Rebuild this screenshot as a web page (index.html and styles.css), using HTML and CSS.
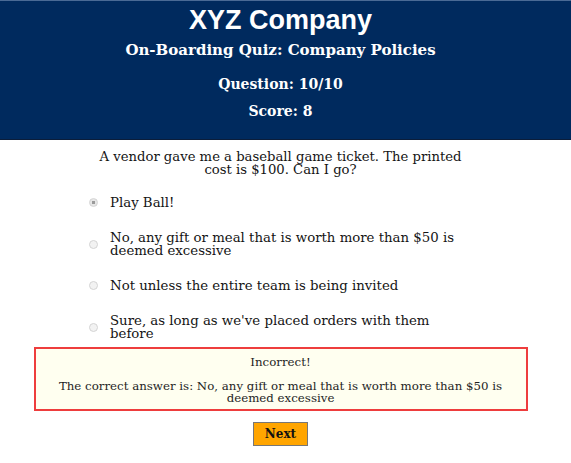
FILE: index.html
```html
<!DOCTYPE html>
<html>
<head>
<meta charset="utf-8">
<link rel="stylesheet" href="styles.css">
</head>
<body>
<header class="header">
  <h1 class="company">XYZ Company</h1>
  <h2 class="quiz-title">On-Boarding Quiz: Company Policies</h2>
  <div class="stat">Question: 10/10</div>
  <div class="stat">Score: 8</div>
</header>
<main class="quiz">
  <p class="question">A vendor gave me a baseball game ticket. The printed<br>cost is $100. Can I go?</p>
  <ul class="options">
    <li class="option"><span class="radio checked"></span><span class="label">Play Ball!</span></li>
    <li class="option"><span class="radio"></span><span class="label">No, any gift or meal that is worth more than $50 is<br>deemed excessive</span></li>
    <li class="option"><span class="radio"></span><span class="label">Not unless the entire team is being invited</span></li>
    <li class="option"><span class="radio"></span><span class="label">Sure, as long as we've placed orders with them<br>before</span></li>
  </ul>
  <div class="feedback">
    <div class="verdict">Incorrect!</div>
    <div class="answer">The correct answer is: No, any gift or meal that is worth more than $50 is<br>deemed excessive</div>
  </div>
  <div class="actions"><button class="next">Next</button></div>
</main>
</body>
</html>
```
FILE: styles.css
```css
html, body {
  margin: 0;
  padding: 0;
  background: #fff;
}
body {
  font-family: "DejaVu Serif", serif;
  color: #141414;
}
.header {
  background: #002a5e;
  border-top: 1px solid #4a6a95;
  border-bottom: 1px solid #0b1d3a;
  height: 140px;
  box-sizing: border-box;
  color: #fff;
  text-align: center;
  padding: 4px 10px 0 0;
}
.company {
  font-family: "Liberation Sans", Arial, sans-serif;
  font-size: 27px;
  font-weight: bold;
  margin: 0;
  line-height: 30px;
}
.quiz-title {
  font-size: 15px;
  font-weight: bold;
  margin: 5px 0 0;
  line-height: 20px;
}
.stat {
  font-size: 14px;
  font-weight: bold;
  line-height: 20px;
  margin-top: 14px;
}
.stat + .stat {
  margin-top: 7px;
}
.quiz {
  display: flex;
  flex-direction: column;
  align-items: center;
  padding-right: 10px;
}
.question {
  font-size: 13.2px;
  line-height: 13px;
  text-align: center;
  margin: 10px 0 0;
}
.options {
  list-style: none;
  margin: 20px 0 0 89px;
  padding: 0;
  align-self: flex-start;
  display: flex;
  flex-direction: column;
  gap: 22px;
}
.option {
  display: flex;
  align-items: center;
  font-size: 13.3px;
  line-height: 13px;
}
.radio {
  width: 7px;
  height: 7px;
  border-radius: 50%;
  border: 1px solid #d4d4d4;
  background: #f2f2f2;
  margin-right: 12px;
  flex: none;
}
.radio.checked {
  background: radial-gradient(circle, #9a9a9a 0 1.5px, #e6e6e6 2px);
}
.feedback {
  margin-top: 7px;
  width: 494px;
  box-sizing: border-box;
  border: 2px solid #ee3d3d;
  background: #fffff0;
  text-align: center;
  padding: 6px 10px 5px;
  font-size: 11.8px;
  color: #1e1e1e;
}
.verdict {
  line-height: 14px;
}
.answer {
  margin-top: 11px;
  line-height: 12px;
}
.actions {
  margin-top: 11px;
}
.next {
  font-family: "DejaVu Serif", serif;
  font-size: 12px;
  font-weight: bold;
  background: #ffa500;
  border: 1px solid #777;
  color: #111;
  width: 55px;
  height: 24px;
  padding: 0;
}
```
